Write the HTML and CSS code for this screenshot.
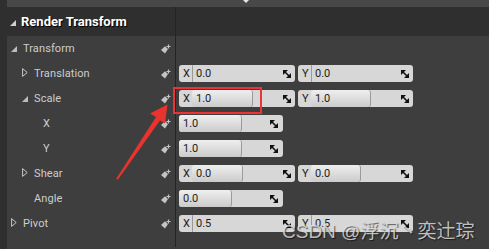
FILE: index.html
```html
<!DOCTYPE html>
<html>
<head>
<meta charset="utf-8">
<link rel="stylesheet" href="styles.css">
</head>
<body>
<div class="page">
  <div class="leftbar"></div>
  <div class="main">
    <div class="topstrip"><span class="notch"></span></div>
    <div class="header">
      <div class="hname">
        <svg class="tri-open" viewBox="0 0 6 6"><polygon points="6,0 6,6 0,6" fill="#cfcfcf"/></svg>
        <span>Render Transform</span>
      </div>
      <div class="hval"></div>
    </div>

    <div class="row">
      <div class="name l0">
        <svg class="tri-open" viewBox="0 0 6 6"><polygon points="6,0 6,6 0,6" fill="#bdbdbd"/></svg>
        <span class="label">Transform</span>
        <svg class="key" viewBox="0 0 10 10"><polygon points="0,6 4,2.2 7,5 4,9.5" fill="#c4c4c4"/><path d="M7.5 0.5v4M5.5 2.5h4" stroke="#c4c4c4" stroke-width="1.2"/></svg>
      </div>
      <div class="val"></div>
    </div>

    <div class="row">
      <div class="name l1">
        <svg class="tri-closed" viewBox="0 0 6 9"><polygon points="0.6,0.6 5.2,4.5 0.6,8.4" fill="none" stroke="#c8c8c8" stroke-width="1"/></svg>
        <span class="label">Translation</span>
        <svg class="key" viewBox="0 0 10 10"><polygon points="0,6 4,2.2 7,5 4,9.5" fill="#c4c4c4"/><path d="M7.5 0.5v4M5.5 2.5h4" stroke="#c4c4c4" stroke-width="1.2"/></svg>
      </div>
      <div class="val">
        <div class="field wide"><span class="axis">X</span><div class="slider"><div class="fill" style="width:0px"></div><span class="num">0.0</span><svg class="spin" viewBox="0 0 8 8"><polygon points="0,0 5,0 0,5" fill="#111"/><polygon points="8,8 3,8 8,3" fill="#111"/><path d="M1 1L7 7" stroke="#111" stroke-width="1.6"/></svg></div></div>
        <div class="field wide"><span class="axis">Y</span><div class="slider"><div class="fill" style="width:0px"></div><span class="num">0.0</span><svg class="spin" viewBox="0 0 8 8"><polygon points="0,0 5,0 0,5" fill="#111"/><polygon points="8,8 3,8 8,3" fill="#111"/><path d="M1 1L7 7" stroke="#111" stroke-width="1.6"/></svg></div></div>
      </div>
    </div>

    <div class="row">
      <div class="name l1">
        <svg class="tri-open" viewBox="0 0 6 6"><polygon points="6,0 6,6 0,6" fill="#bdbdbd"/></svg>
        <span class="label">Scale</span>
        <svg class="key" viewBox="0 0 10 10"><polygon points="0,6 4,2.2 7,5 4,9.5" fill="#c4c4c4"/><path d="M7.5 0.5v4M5.5 2.5h4" stroke="#c4c4c4" stroke-width="1.2"/></svg>
      </div>
      <div class="val">
        <div class="field wide"><span class="axis">X</span><div class="slider"><div class="fill" style="width:61px"></div><span class="num">1.0</span><svg class="spin" viewBox="0 0 8 8"><polygon points="0,0 5,0 0,5" fill="#111"/><polygon points="8,8 3,8 8,3" fill="#111"/><path d="M1 1L7 7" stroke="#111" stroke-width="1.6"/></svg></div></div>
        <div class="field wide"><span class="axis">Y</span><div class="slider"><div class="fill" style="width:60px"></div><span class="num">1.0</span><svg class="spin" viewBox="0 0 8 8"><polygon points="0,0 5,0 0,5" fill="#111"/><polygon points="8,8 3,8 8,3" fill="#111"/><path d="M1 1L7 7" stroke="#111" stroke-width="1.6"/></svg></div></div>
      </div>
    </div>

    <div class="row">
      <div class="name l2">
        <span class="label">X</span>
        <svg class="key" viewBox="0 0 10 10"><polygon points="0,6 4,2.2 7,5 4,9.5" fill="#c4c4c4"/><path d="M7.5 0.5v4M5.5 2.5h4" stroke="#c4c4c4" stroke-width="1.2"/></svg>
      </div>
      <div class="val">
        <div class="field single"><div class="slider"><div class="fill" style="width:63px"></div><span class="num">1.0</span><svg class="spin" viewBox="0 0 8 8"><polygon points="0,0 5,0 0,5" fill="#111"/><polygon points="8,8 3,8 8,3" fill="#111"/><path d="M1 1L7 7" stroke="#111" stroke-width="1.6"/></svg></div></div>
      </div>
    </div>

    <div class="row">
      <div class="name l2">
        <span class="label">Y</span>
        <svg class="key" viewBox="0 0 10 10"><polygon points="0,6 4,2.2 7,5 4,9.5" fill="#c4c4c4"/><path d="M7.5 0.5v4M5.5 2.5h4" stroke="#c4c4c4" stroke-width="1.2"/></svg>
      </div>
      <div class="val">
        <div class="field single"><div class="slider"><div class="fill" style="width:63px"></div><span class="num">1.0</span><svg class="spin" viewBox="0 0 8 8"><polygon points="0,0 5,0 0,5" fill="#111"/><polygon points="8,8 3,8 8,3" fill="#111"/><path d="M1 1L7 7" stroke="#111" stroke-width="1.6"/></svg></div></div>
      </div>
    </div>

    <div class="row">
      <div class="name l1">
        <svg class="tri-closed" viewBox="0 0 6 9"><polygon points="0.6,0.6 5.2,4.5 0.6,8.4" fill="none" stroke="#c8c8c8" stroke-width="1"/></svg>
        <span class="label">Shear</span>
        <svg class="key" viewBox="0 0 10 10"><polygon points="0,6 4,2.2 7,5 4,9.5" fill="#c4c4c4"/><path d="M7.5 0.5v4M5.5 2.5h4" stroke="#c4c4c4" stroke-width="1.2"/></svg>
      </div>
      <div class="val">
        <div class="field wide"><span class="axis">X</span><div class="slider"><div class="fill" style="width:51px"></div><span class="num">0.0</span><svg class="spin" viewBox="0 0 8 8"><polygon points="0,0 5,0 0,5" fill="#111"/><polygon points="8,8 3,8 8,3" fill="#111"/><path d="M1 1L7 7" stroke="#111" stroke-width="1.6"/></svg></div></div>
        <div class="field wide"><span class="axis">Y</span><div class="slider"><div class="fill" style="width:50px"></div><span class="num">0.0</span><svg class="spin" viewBox="0 0 8 8"><polygon points="0,0 5,0 0,5" fill="#111"/><polygon points="8,8 3,8 8,3" fill="#111"/><path d="M1 1L7 7" stroke="#111" stroke-width="1.6"/></svg></div></div>
      </div>
    </div>

    <div class="row">
      <div class="name l1">
        <span class="spacer"></span>
        <span class="label">Angle</span>
        <svg class="key" viewBox="0 0 10 10"><polygon points="0,6 4,2.2 7,5 4,9.5" fill="#c4c4c4"/><path d="M7.5 0.5v4M5.5 2.5h4" stroke="#c4c4c4" stroke-width="1.2"/></svg>
      </div>
      <div class="val">
        <div class="field single"><div class="slider"><div class="fill" style="width:53px"></div><span class="num">0.0</span><svg class="spin" viewBox="0 0 8 8"><polygon points="0,0 5,0 0,5" fill="#111"/><polygon points="8,8 3,8 8,3" fill="#111"/><path d="M1 1L7 7" stroke="#111" stroke-width="1.6"/></svg></div></div>
      </div>
    </div>

    <div class="row">
      <div class="name l0">
        <svg class="tri-closed" viewBox="0 0 6 9"><polygon points="0.6,0.6 5.2,4.5 0.6,8.4" fill="none" stroke="#c8c8c8" stroke-width="1"/></svg>
        <span class="label">Pivot</span>
        <svg class="key" viewBox="0 0 10 10"><polygon points="0,6 4,2.2 7,5 4,9.5" fill="#c4c4c4"/><path d="M7.5 0.5v4M5.5 2.5h4" stroke="#c4c4c4" stroke-width="1.2"/></svg>
      </div>
      <div class="val">
        <div class="field wide"><span class="axis">X</span><div class="slider"><div class="fill" style="width:0px"></div><span class="num">0.5</span><svg class="spin" viewBox="0 0 8 8"><polygon points="0,0 5,0 0,5" fill="#111"/><polygon points="8,8 3,8 8,3" fill="#111"/><path d="M1 1L7 7" stroke="#111" stroke-width="1.6"/></svg></div></div>
        <div class="field wide"><span class="axis">Y</span><div class="slider"><div class="fill" style="width:0px"></div><span class="num">0.5</span><svg class="spin" viewBox="0 0 8 8"><polygon points="0,0 5,0 0,5" fill="#111"/><polygon points="8,8 3,8 8,3" fill="#111"/><path d="M1 1L7 7" stroke="#111" stroke-width="1.6"/></svg></div></div>
      </div>
    </div>

    <div class="filler">
      <div class="fname"></div>
      <div class="fval"></div>
    </div>
  </div>

  <div class="redbox"></div>
  <svg class="arrow" viewBox="0 0 489 249" width="489" height="249">
    <polygon points="167.5,104.5 150,113.5 156,117 116,179 118,179.5 160,120.5 165,123.5" fill="#e8332f"/>
  </svg>
  <div class="watermark">CSDN @浮沉丶奕辻琮</div>
</div>
</body>
</html>
```
FILE: styles.css
```css
html, body {
  margin: 0;
  padding: 0;
}
body {
  background: #3e3e3e;
  font-family: Roboto, "Noto Sans", sans-serif;
  overflow: hidden;
}
.page {
  position: relative;
  display: flex;
  width: 489px;
  height: 249px;
}
.leftbar {
  width: 7px;
  background: #2f2f2f;
  flex: none;
}
.main {
  flex: 1;
  display: flex;
  flex-direction: column;
}
.topstrip {
  height: 7px;
  background: #484848;
  display: flex;
  justify-content: center;
  padding-right: 4px;
}
.notch {
  width: 0;
  height: 0;
  border-left: 3px solid transparent;
  border-right: 3px solid transparent;
  border-top: 3px solid #e6e6e6;
}
.header {
  height: 29px;
  background: #2f2f2f;
  display: flex;
}
.hname {
  width: 168px;
  display: flex;
  align-items: center;
  padding-left: 3px;
  box-sizing: border-box;
  color: #ffffff;
  font-weight: bold;
  font-size: 13px;
  text-shadow: 1px 1px 1px #000;
}
.hname .tri-open {
  width: 6px;
  height: 6px;
  margin-right: 5px;
  margin-top: 2px;
}
.hval {
  flex: 1;
  border-left: 1px solid #242424;
}
.row {
  height: 25px;
  display: flex;
}
.name {
  width: 168px;
  box-sizing: border-box;
  display: flex;
  align-items: center;
  padding-right: 4px;
  color: #cdcdcd;
  font-size: 11px;
}
.name.l0 { padding-left: 4px; }
.name.l1 { padding-left: 15px; }
.name.l2 { padding-left: 36px; }
.tri-open {
  width: 6px;
  height: 6px;
  margin-right: 6px;
  flex: none;
}
.tri-closed {
  width: 6px;
  height: 9px;
  margin-right: 6px;
  margin-bottom: 2px;
  flex: none;
}
.spacer {
  width: 12px;
  flex: none;
}
.label {
  flex: 1;
  letter-spacing: 0.1px;
}
.key {
  width: 10px;
  height: 10px;
  flex: none;
}
.val {
  flex: 1;
  border-left: 1px solid #242424;
  display: flex;
  align-items: center;
  gap: 3px;
  padding-left: 3px;
}
.field {
  height: 17px;
  background: #d7d7d7;
  border-radius: 3px;
  display: flex;
  align-items: center;
  color: #1c1c1c;
  font-size: 11px;
  box-sizing: border-box;
}
.field.wide { width: 116px; }
.field.wide + .field.wide { width: 115px; }
.field.single { width: 104px; }
.axis {
  width: 13px;
  padding-left: 4px;
  box-sizing: border-box;
  flex: none;
}
.slider {
  position: relative;
  flex: 1;
  height: 100%;
  display: flex;
  align-items: center;
  padding: 0 4px;
}
.fill {
  position: absolute;
  left: 0;
  top: 0;
  bottom: 0;
  background: linear-gradient(#efefef, #cbcbcb);
  border-radius: 3px;
  border-right: 1px solid #9a9a9a;
  box-sizing: border-box;
}
.num {
  position: relative;
  flex: 1;
}
.spin {
  width: 8px;
  height: 8px;
  position: relative;
}
.field.single .spin {
  margin-right: 1px;
}
.filler {
  flex: 1;
  display: flex;
}
.fname {
  width: 168px;
}
.fval {
  flex: 1;
  border-left: 1px solid #242424;
  margin-bottom: 2px;
}
.redbox {
  position: absolute;
  left: 173px;
  top: 87px;
  width: 89px;
  height: 27px;
  box-sizing: border-box;
  border: 2px solid #ec3434;
}
.arrow {
  position: absolute;
  left: 0;
  top: 0;
}
.watermark {
  position: absolute;
  left: 282px;
  top: 216px;
  font-family: "Liberation Sans", "Noto Sans CJK SC", sans-serif;
  font-size: 19px;
  color: rgba(225, 225, 225, 0.82);
  text-shadow: 1px 1px 1px rgba(0, 0, 0, 0.6);
  white-space: nowrap;
}
```
